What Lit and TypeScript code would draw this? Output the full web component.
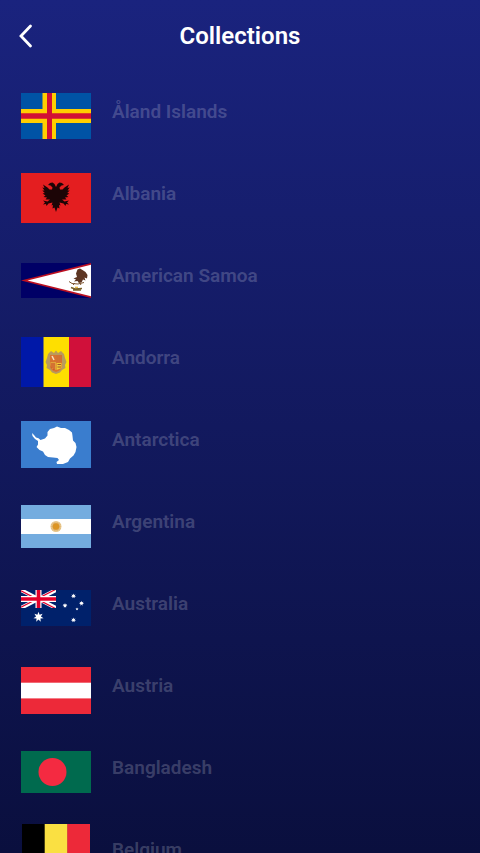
import { LitElement, html, svg, css, type SVGTemplateResult } from "lit";
import { customElement, property } from "lit/decorators.js";

interface Country {
  name: string;
  width: number;
  height: number;
  art: SVGTemplateResult;
}

/** Points of a star with the given number of tips, centred on cx, cy. */
function star(cx: number, cy: number, r: number, tips: number): string {
  const pts: string[] = [];
  for (let i = 0; i < tips * 2; i++) {
    const radius = i % 2 ? r * 0.48 : r;
    const a = (Math.PI * i) / tips - Math.PI / 2;
    pts.push(`${(cx + radius * Math.cos(a)).toFixed(2)},${(cy + radius * Math.sin(a)).toFixed(2)}`);
  }
  return pts.join(" ");
}

/** Left half of the double-headed eagle; the right half is its mirror image. */
const EAGLE_HALF =
  "M35 14L33.500 11L31.500 9.500L29 10L27 12L29.500 12.500L31.500 14.500L31 16.500L28.500 16.500L26.500 14.500L22 11.500L23.500 15L21.300 14.500L23.500 17.500L21.300 17.500L23.800 20L21.600 20.500L24.500 22.500L22.500 24L26 24.500L24.500 26.500L29 26.500L26.500 28.500L22 27.500L24 29.500L22 31.500L25 31L25.500 33L27.500 30.500L31.500 29.500L30.500 32.500L32 32L31.500 35.500L33.500 34.500L35 39Z";

const COUNTRIES: Country[] = [
  {
    name: "Åland Islands", width: 70, height: 46,
    art: svg`
      <rect width="70" height="46" fill="#0053a5"></rect>
      <path d="M21.500 0h13.500v46h-13.500zM0 16h70v14h-70z" fill="#ffce00"></path>
      <path d="M26 0h5v46h-5zM0 20.300h70v5.400h-70z" fill="#d21034"></path>`,
  },
  {
    name: "Albania", width: 70, height: 50,
    art: svg`
      <rect width="70" height="50" fill="#e41e20"></rect>
      <g fill="#1c0506">
        <path d=${EAGLE_HALF}></path>
        <path transform="translate(70 0) scale(-1 1)" d=${EAGLE_HALF}></path>
      </g>`,
  },
  {
    name: "American Samoa", width: 70, height: 35,
    art: svg`
      <rect width="70" height="35" fill="#000066"></rect>
      <path d="M0 17.500L70 0V35z" fill="#bd1021"></path>
      <path d="M6.500 17.500L70 1.800V33.200z" fill="#fff"></path>
      <path d="M56.500 6.500L59 5.500L61.500 7L64.500 9L66.500 12L66 15.500L63.500 14.500L64.500 17.500L62 16.500L60.500 19.500L58 20L56.500 18L53 18.500L55 16.500L52.500 15.500L56 14L55 10.500Z" fill="#5c3522"></path>
      <path d="M48 18.500L51 20.500L57 21L63 19.500M52 22L54 20M60 22L58 19" stroke="#7d5530" stroke-width="1" fill="none"></path>
      <path d="M50 24.500L54 26L61 25.500M52 27H60" stroke="#7a6228" stroke-width="1.600" fill="none"></path>
      <path d="M54 24.300h3" stroke="#e7b638" stroke-width="1.200"></path>`,
  },
  {
    name: "Andorra", width: 70, height: 50,
    art: svg`
      <rect width="23" height="50" fill="#0018a8"></rect>
      <rect x="22.500" width="26" height="50" fill="#fedf00"></rect>
      <rect x="48" width="22" height="50" fill="#d0103a"></rect>
      <path d="M27 17L30 14L33 16L35 13.500L37 16L40 14L43 17L44 21L45.500 25L44 28L44.500 31L41 33L39 35.500L35 37L31 35.500L29 33L25.500 31L26 28L24.500 25L26 21Z" fill="#b99a5b"></path>
      <path d="M29 18h12v11q0 4-6 6q-6-2-6-6z" fill="#d9722e"></path>
      <path d="M35 18h6v7h-6z" fill="#dba13b"></path>
      <path d="M29.500 25h5.500v8q-5-1-5.500-5z" fill="#e0a33a"></path>
      <path d="M36 18v7M38 18v7M40 18v7M31 26v5M33 26v7" stroke="#c8402b" stroke-width="1"></path>
      <path d="M31 19l2 4" stroke="#f4dfc0" stroke-width="1.500"></path>
      <path d="M35.500 26h5v5l-5 2z" fill="#f0ca35"></path>
      <path d="M36.500 27.500h3.500M36.500 30h3.500" stroke="#a2542c" stroke-width="1"></path>`,
  },
  {
    name: "Antarctica", width: 70, height: 47,
    art: svg`
      <rect width="70" height="47" fill="#3a7dce"></rect>
      <path d="M11 12L13 14L15 16.500L17.500 17.300L19.500 19L24 17.500L26.500 14.500L26.500 11L29 8L33 7L36 5.500L40 7L44 7L48 9L51 11.500L51.500 15L52 19.500L54.500 22L55.500 26L54.500 31L52.500 34.500L49 37.500L47 41L42 43L36 43L35.500 41L38 39L36.500 37L32 36.500L27 36L24 34L22 30.500L18.500 29L15.500 26L17 23.500L17 20L14 18L11.500 15Z" fill="#fff"></path>`,
  },
  {
    name: "Argentina", width: 70, height: 43,
    art: svg`
      <rect width="70" height="43" fill="#74acdf"></rect>
      <rect y="14" width="70" height="15" fill="#fff"></rect>
      <circle cx="35" cy="21.500" r="5.500" fill="#e9c98f"></circle>
      <polygon points=${star(35, 21.5, 5.5, 16)} fill="#d9a55a"></polygon>
      <circle cx="35" cy="21.500" r="3.200" fill="#dc9524"></circle>`,
  },
  {
    name: "Australia", width: 70, height: 36,
    art: svg`
      <rect width="70" height="36" fill="#00216b"></rect>
      <svg width="35" height="18" viewBox="0 0 35 18">
        <path d="M0 0L35 18M35 0L0 18" stroke="#fff" stroke-width="3.800"></path>
        <path d="M0 .8L35 18.800M35 -.8L0 17.200" stroke="#e4002b" stroke-width="1.200"></path>
        <path d="M17.500 0V18M0 9H35" stroke="#fff" stroke-width="6"></path>
        <path d="M17.500 0V18M0 9H35" stroke="#e4002b" stroke-width="3.600"></path>
      </svg>
      <g fill="#fff">
        <polygon points=${star(17.5, 27, 5.2, 7)}></polygon>
        <polygon points=${star(52.5, 6, 2.6, 7)}></polygon>
        <polygon points=${star(44, 15.5, 2.6, 7)}></polygon>
        <polygon points=${star(60.5, 13.3, 2.6, 7)}></polygon>
        <polygon points=${star(56, 19, 1.6, 5)}></polygon>
        <polygon points=${star(52.5, 30, 2.6, 7)}></polygon>
      </g>`,
  },
  {
    name: "Austria", width: 70, height: 47,
    art: svg`
      <rect width="70" height="47" fill="#ed2939"></rect>
      <rect y="15.700" width="70" height="15.700" fill="#fff"></rect>`,
  },
  {
    name: "Bangladesh", width: 70, height: 42,
    art: svg`
      <rect width="70" height="42" fill="#006a4e"></rect>
      <circle cx="31.500" cy="21" r="14" fill="#f42a41"></circle>`,
  },
  {
    name: "Belgium", width: 68, height: 60,
    art: svg`
      <rect width="23" height="60" fill="#000"></rect>
      <rect x="22.700" width="23" height="60" fill="#fae042"></rect>
      <rect x="45.300" width="22.700" height="60" fill="#ed2939"></rect>`,
  },
];

@customElement("country-row")
export class CountryRow extends LitElement {
  @property({ attribute: false }) country!: Country;

  static styles = css`
    :host {
      display: block;
    }
    .row {
      display: grid;
      grid-template-columns: 70px 1fr;
      column-gap: 21px;
      align-items: center;
      height: 82px;
      padding: 0 21px;
    }
    .flag {
      display: block;
      justify-self: center;
    }
    .name {
      padding-bottom: 8px;
      font-size: 19px;
      line-height: 24px;
      font-weight: 600;
      color: rgba(255, 255, 255, 0.2);
    }
  `;

  render() {
    const { name, width, height, art } = this.country;
    return html`
      <div class="row">
        <svg class="flag" width=${width} height=${height} viewBox="0 0 ${width} ${height}" aria-hidden="true">${art}</svg>
        <span class="name">${name}</span>
      </div>
    `;
  }
}

@customElement("app-root")
export class AppRoot extends LitElement {
  static styles = css`
    :host {
      display: flex;
      flex-direction: column;
      height: 100vh;
      overflow: hidden;
      background: linear-gradient(#1a237e, #0a0f3e);
      font-family: Roboto, "Liberation Sans", sans-serif;
      color: #fff;
    }
    .bar {
      display: grid;
      grid-template-columns: 52px 1fr 52px;
      align-items: center;
      flex: none;
      height: 72px;
    }
    .back {
      display: grid;
      place-items: center;
      height: 48px;
      padding: 0;
      border: 0;
      background: none;
      color: inherit;
      cursor: pointer;
    }
    .title {
      margin: 0;
      text-align: center;
      font-size: 24px;
      line-height: 32px;
      font-weight: 600;
    }
    .list {
      flex: 1;
      min-height: 0;
      margin: 0;
      padding: 3px 0 0;
      list-style: none;
      overflow-y: auto;
      scrollbar-width: none;
    }
  `;

  render() {
    return html`
      <header class="bar">
        <button class="back" type="button" aria-label="Back">
          <svg width="24" height="24" viewBox="0 0 24 24" fill="none" stroke="currentColor" stroke-width="2.800" stroke-linecap="round" aria-hidden="true">
            <path d="M16.500 2L7 12L16.500 22"></path>
          </svg>
        </button>
        <h1 class="title">Collections</h1>
      </header>
      <ul class="list">
        ${COUNTRIES.map((c) => html`<li><country-row .country=${c}></country-row></li>`)}
      </ul>
    `;
  }
}
